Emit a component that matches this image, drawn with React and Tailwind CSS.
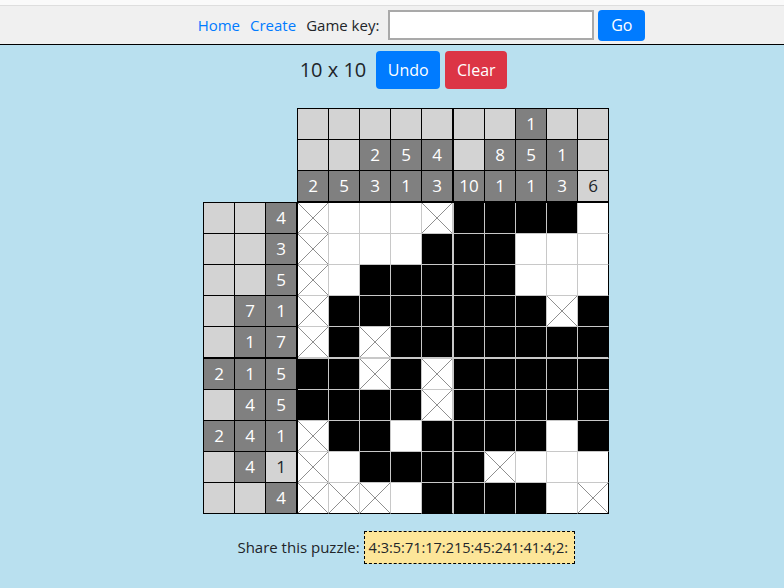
import React from 'react'

/* ── Puzzle data ── */
const COL_CLUES = [
  ['', '', '', '', '', '', '', '1', '', ''],
  ['', '', '2', '5', '4', '', '8', '5', '1', ''],
  ['2', '5', '3', '1', '3', '10', '1', '1', '3', '6!'],
]

const ROW_CLUES = [
  ['', '', '4'],
  ['', '', '3'],
  ['', '', '5'],
  ['', '7', '1'],
  ['', '1', '7'],
  ['2', '1', '5'],
  ['', '4', '5'],
  ['2', '4', '1'],
  ['', '4', '1!'],
  ['', '', '4'],
]

const GRID = [
  'X...XFFFF.',
  'X...FFF...',
  'X.FFFFF...',
  'XFFFFFFFXF',
  'XFXFFFFFFF',
  'FFXFXFFFFF',
  'FFFFXFFFFF',
  'XFF.FFFF.F',
  'X.FFFFX...',
  'XXX.FFFF.X',
]

function clueTone(v) {
  if (!v) return 'bg-[#d3d3d3]'
  if (v.endsWith('!')) return 'bg-[#d3d3d3] text-[#212529]'
  return 'bg-[#808080] text-white'
}

function Cross() {
  return (
    <svg className="w-full h-full block" viewBox="0 0 30 30" preserveAspectRatio="none">
      <line x1="0" y1="0" x2="30" y2="30" stroke="#8f8f8f" strokeWidth="1" />
      <line x1="30" y1="0" x2="0" y2="30" stroke="#8f8f8f" strokeWidth="1" />
    </svg>
  )
}

function ColClues() {
  return (
    <div className="flex flex-col border-l border-t border-black">
      {COL_CLUES.map((row, r) => (
        <div key={r} className="flex">
          {row.map((v, c) => (
            <div
              key={c}
              className={`${c === 4 ? 'w-[32px] border-r-2' : 'w-[31px] border-r'} h-[31px] border-b border-black flex items-center justify-center text-[17px] ${clueTone(v)}`}
            >
              {v.replace('!', '')}
            </div>
          ))}
        </div>
      ))}
    </div>
  )
}

function RowClues() {
  return (
    <div className="flex flex-col border-l border-t border-black">
      {ROW_CLUES.map((row, r) => (
        <div key={r} className="flex">
          {row.map((v, c) => (
            <div
              key={c}
              className={`${r === 4 ? 'h-[32px] border-b-2' : 'h-[31px] border-b'} w-[31px] border-r border-black flex items-center justify-center text-[17px] ${clueTone(v)}`}
            >
              {v.replace('!', '')}
            </div>
          ))}
        </div>
      ))}
    </div>
  )
}

function Board() {
  return (
    <div className="flex flex-col border-l border-t border-black">
      {GRID.map((line, r) => (
        <div key={r} className="flex">
          {line.split('').map((s, c) => {
            const right = c === 4 ? 'w-[32px] border-r-2 border-r-[#c8c8c8]' : c === 9 ? 'w-[31px] border-r border-r-black' : 'w-[31px] border-r border-r-[#c8c8c8]'
            const bottom = r === 4 ? 'h-[32px] border-b-2 border-b-[#c8c8c8]' : r === 9 ? 'h-[31px] border-b border-b-black' : 'h-[31px] border-b border-b-[#c8c8c8]'
            return (
              <div key={c} className={`${right} ${bottom} ${s === 'F' ? 'bg-black' : 'bg-white'}`}>
                {s === 'X' && <Cross />}
              </div>
            )
          })}
        </div>
      ))}
    </div>
  )
}

export default function App() {
  return (
    <div className="min-h-screen bg-[#b9e0ef] text-[#212529] font-['Open_Sans','Noto_Sans',sans-serif]">
      {/* Nav */}
      <div className="h-[6px] bg-[#fafafa] border-b border-[#dedede]" />
      <nav className="h-[39px] bg-[#f0f0f0] border-b border-black flex items-center justify-center pl-[59px] text-[15px]">
        <a className="text-[#007bff]">Home</a>
        <a className="text-[#007bff] ml-[10px]">Create</a>
        <span className="ml-[10px]">Game key:</span>
        <input className="ml-[9px] w-[206px] h-[30px] bg-white border-2 border-[#a9a9a9] outline-none" />
        <button className="ml-[4px] w-[47px] h-[31px] rounded-[4px] bg-[#007bff] text-white text-[16px]">Go</button>
      </nav>

      {/* Toolbar */}
      <div className="mt-[6px] flex items-center justify-center pl-[23px]">
        <span className="text-[20px]">10 x 10</span>
        <button className="ml-[10px] w-[64px] h-[38px] rounded-[4px] bg-[#007bff] text-white text-[16px]">Undo</button>
        <button className="ml-[5px] w-[62px] h-[38px] rounded-[4px] bg-[#dc3545] text-white text-[16px]">Clear</button>
      </div>

      {/* Puzzle */}
      <div className="mt-[19px] flex justify-center pl-[28px]">
        <div className="flex flex-col">
          <div className="flex">
            <div className="w-[94px]" />
            <ColClues />
          </div>
          <div className="flex">
            <RowClues />
            <Board />
          </div>
        </div>
      </div>

      {/* Share */}
      <div className="mt-[17px] flex items-center justify-center pl-[28px] text-[15px]">
        <span>Share this puzzle:</span>
        <div className="ml-[4px] w-[211px] h-[33px] flex items-center pl-[4px] bg-[#fde699] border border-dashed border-black overflow-hidden whitespace-nowrap text-[14.5px]">
          4:3:5:71:17:215:45:241:41:4;2:
        </div>
      </div>
    </div>
  )
}
